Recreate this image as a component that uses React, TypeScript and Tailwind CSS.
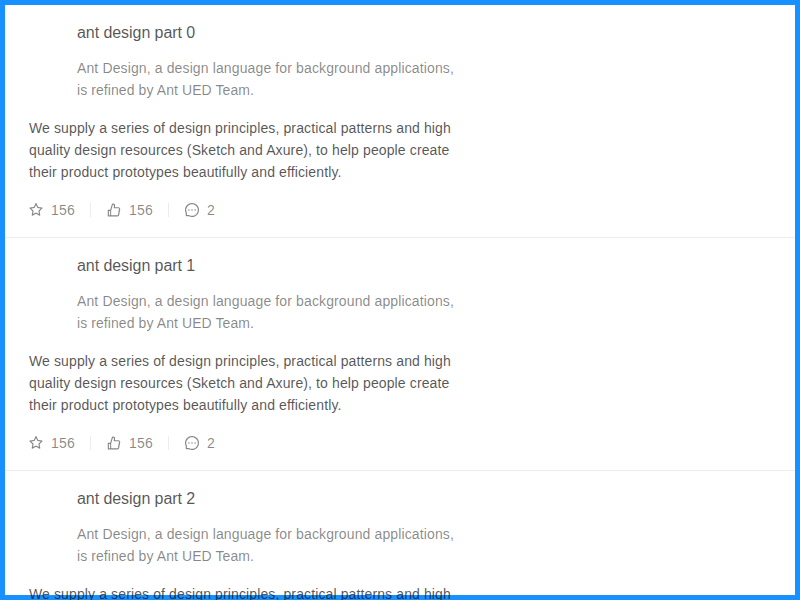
import React from "react";
import { AiOutlineStar, AiOutlineLike, AiOutlineMessage } from "react-icons/ai";

const items = [0, 1, 2];

// Ant's icon glyphs fill the inner 896 units of their 1024 grid.
const iconBox = "64 64 896 896";

function Action({ icon, text, last }: { icon: React.ReactNode; text: string; last?: boolean }) {
  return (
    <li className="relative flex items-center px-4 first:pl-0">
      <span className="mr-2 block size-[14px]">{icon}</span>
      <span className="tracking-[0.21px]">{text}</span>
      {!last && <i className="absolute right-0 top-1 h-[14px] w-px bg-[#ececec]" />}
    </li>
  );
}

function Item({ index }: { index: number }) {
  return (
    <li className="border-b border-[#ececec] px-6 py-4">
      <div className="mb-4 pl-12">
        <h4 className="mb-3 text-[16px] leading-6 tracking-[-0.06px] text-black/68">ant design part {index}</h4>
        <p className="w-[390px] text-black/48">
          <span className="tracking-[0.125px]">Ant Design, a design language for background applications, </span>
          <br />
          <span className="tracking-[0.08px]">is refined by Ant UED Team.</span>
        </p>
      </div>
      <p className="w-[440px] tracking-[0.12px] text-black/68">
        We supply a series of design principles, practical patterns and high
        <br />
        quality design resources (Sketch and Axure), to help people create
        <br />
        their product prototypes beautifully and efficiently.
      </p>
      <ul className="mt-4 flex text-black/48">
        <Action icon={<AiOutlineStar size={14} viewBox={iconBox} />} text="156" />
        <Action icon={<AiOutlineLike size={14} viewBox={iconBox} />} text="156" />
        <Action icon={<AiOutlineMessage size={14} viewBox={iconBox} />} text="2" last />
      </ul>
    </li>
  );
}

export default function App() {
  return (
    <div className="h-[600px] w-[800px] overflow-hidden bg-white font-['Liberation_Sans',Arial,sans-serif] text-[14px] leading-[22px]">
      <div className="h-[600px] border-[5px] border-[#1890ff]">
        <ul>
          {items.map((i) => (
            <Item key={i} index={i} />
          ))}
        </ul>
      </div>
    </div>
  );
}
